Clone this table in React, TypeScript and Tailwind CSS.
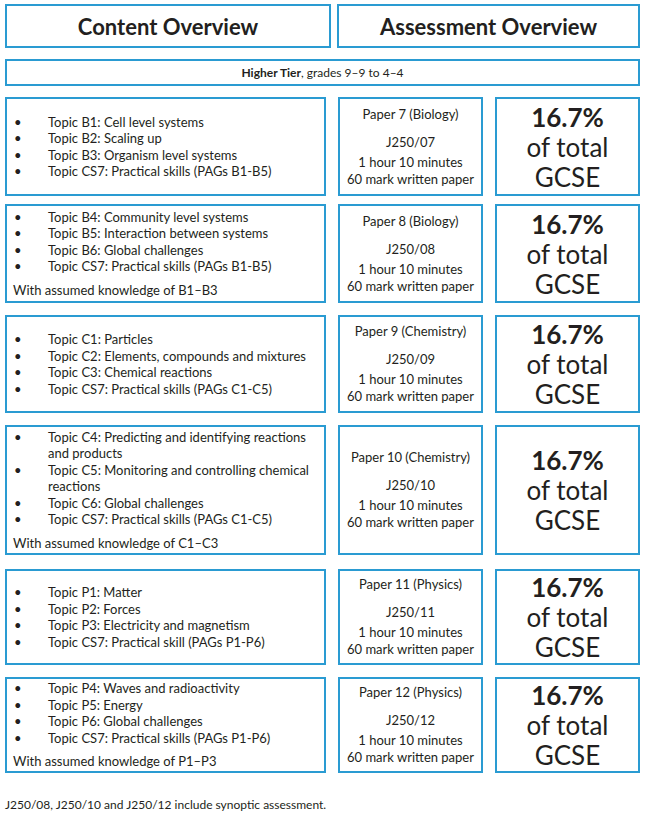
import React from "react";

type Row = {
  topics: React.ReactNode[];
  assumed?: string;
  paper: string;
  code: string;
  h: string;
  mt: string;
};

const rows: Row[] = [
  {
    topics: [
      "Topic B1: Cell level systems",
      "Topic B2: Scaling up",
      "Topic B3: Organism level systems",
      "Topic CS7: Practical skills (PAGs B1-B5)",
    ],
    paper: "Paper 7 (Biology)",
    code: "J250/07",
    h: "h-[99px]",
    mt: "mt-0",
  },
  {
    topics: [
      "Topic B4: Community level systems",
      "Topic B5: Interaction between systems",
      "Topic B6: Global challenges",
      "Topic CS7: Practical skills (PAGs B1-B5)",
    ],
    assumed: "With assumed knowledge of B1–B3",
    paper: "Paper 8 (Biology)",
    code: "J250/08",
    h: "h-[99px]",
    mt: "mt-[8px]",
  },
  {
    topics: [
      "Topic C1: Particles",
      "Topic C2: Elements, compounds and mixtures",
      "Topic C3: Chemical reactions",
      "Topic CS7: Practical skills (PAGs C1-C5)",
    ],
    paper: "Paper 9 (Chemistry)",
    code: "J250/09",
    h: "h-[98px]",
    mt: "mt-[12px]",
  },
  {
    topics: [
      <>
        Topic C4: Predicting and identifying reactions
        <br />
        and products
      </>,
      <>
        Topic C5: Monitoring and controlling chemical
        <br />
        reactions
      </>,
      "Topic C6: Global challenges",
      "Topic CS7: Practical skills (PAGs C1-C5)",
    ],
    assumed: "With assumed knowledge of C1–C3",
    paper: "Paper 10 (Chemistry)",
    code: "J250/10",
    h: "h-[130px]",
    mt: "mt-[12px]",
  },
  {
    topics: [
      "Topic P1: Matter",
      "Topic P2: Forces",
      "Topic P3: Electricity and magnetism",
      "Topic CS7: Practical skill (PAGs P1-P6)",
    ],
    paper: "Paper 11 (Physics)",
    code: "J250/11",
    h: "h-[96px]",
    mt: "mt-[14px]",
  },
  {
    topics: [
      "Topic P4: Waves and radioactivity",
      "Topic P5: Energy",
      "Topic P6: Global challenges",
      "Topic CS7: Practical skills (PAGs P1-P6)",
    ],
    assumed: "With assumed knowledge of P1–P3",
    paper: "Paper 12 (Physics)",
    code: "J250/12",
    h: "h-[96px]",
    mt: "mt-[12px]",
  },
];

const box = "border-2 border-[#2a9bd2] bg-white";

export default function App() {
  return (
    <div
      className="w-[646px] h-[819px] bg-white text-[#231f20] pl-[5px] pt-[4px]"
      style={{ fontFamily: "Lato, 'Open Sans', sans-serif" }}
    >
      <div className="flex gap-[6px]">
        <div className={`${box} w-[326px] h-[44px] flex items-center justify-center text-[22px] font-bold`}>
          Content Overview
        </div>
        <div className={`${box} w-[303px] h-[44px] flex items-center justify-center text-[22px] font-bold`}>
          Assessment Overview
        </div>
      </div>
      <div className={`${box} mt-[11px] w-[635px] h-[27px] flex items-center justify-center text-[12px]`}>
        <span>
          <span className="font-bold">Higher Tier</span>, grades 9–9 to 4–4
        </span>
      </div>
      <div className="mt-[11px] flex flex-col">
        {rows.map((r, i) => (
          <div key={i} className={`flex gap-3 ${r.mt} ${r.h}`}>
            <div className={`${box} w-[321px] flex flex-col justify-center pl-[6px] text-[13px] leading-[16.5px]`}>
              <ul>
                {r.topics.map((t, j) => (
                  <li key={j} className="flex">
                    <span className="w-[35px] shrink-0 pl-[1px]">•</span>
                    <span>{t}</span>
                  </li>
                ))}
              </ul>
              {r.assumed && <div className="mt-[7px]">{r.assumed}</div>}
            </div>
            <div className={`${box} w-[145px] flex flex-col items-center justify-center text-center text-[13px] leading-[17px]`}>
              <div>{r.paper}</div>
              <div className="mt-[11px]">{r.code}</div>
              <div className="mt-[3px]">1 hour 10 minutes</div>
              <div>60 mark written paper</div>
            </div>
            <div className={`${box} w-[145px] flex flex-col items-center justify-center text-center text-[26px] leading-[30px]`}>
              <div className="font-bold">16.7%</div>
              <div>of total</div>
              <div>GCSE</div>
            </div>
          </div>
        ))}
      </div>
      <div className="mt-[23px] text-[12px]">
        J250/08, J250/10 and J250/12 include synoptic assessment.
      </div>
    </div>
  );
}
